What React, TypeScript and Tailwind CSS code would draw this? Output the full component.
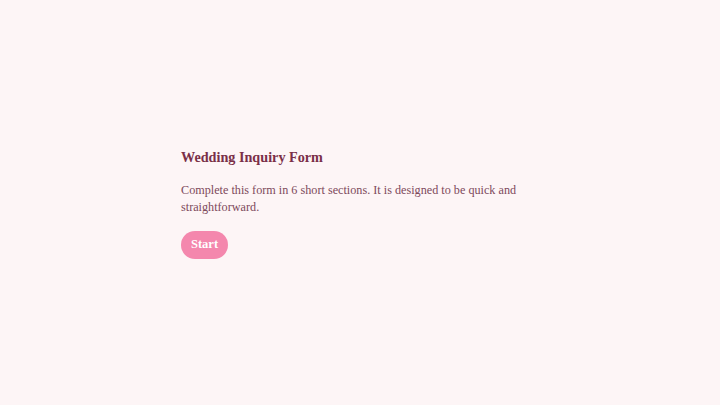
export default function App() {
  return (
    <div
      className="flex min-h-[405px] w-full items-center justify-center bg-[#fdf5f6]"
      style={{ fontFamily: '"Liberation Serif", "DejaVu Serif", serif' }}
    >
      <div className="w-[358px]">
        <h1 className="text-[14.2px] font-bold leading-[20px] text-[#7a2f48]">
          Wedding Inquiry Form
        </h1>
        <p className="mt-[15px] text-[12.2px] leading-[17px] text-[#7d4a5c]">
          Complete this form in 6 short sections. It is designed to be quick and straightforward.
        </p>
        <button className="mt-[15px] h-[28px] rounded-full bg-[#f487ad] px-[10px] text-[12.5px] font-bold text-white">
          Start
        </button>
      </div>
    </div>
  );
}
